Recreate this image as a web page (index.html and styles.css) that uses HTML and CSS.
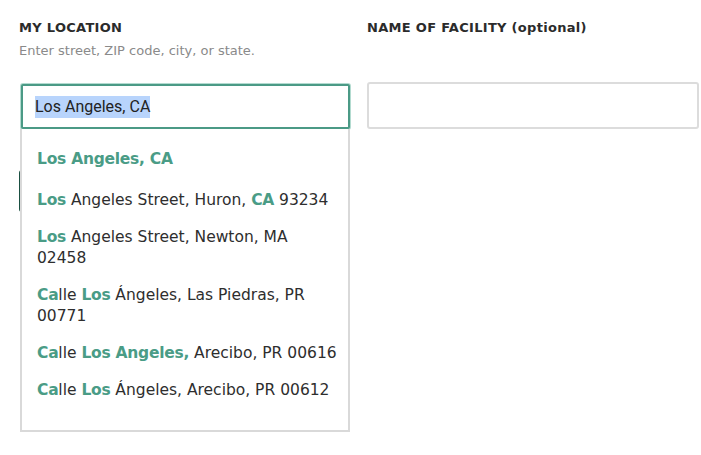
FILE: index.html
```html
<!DOCTYPE html>
<html lang="en">
<head>
<meta charset="utf-8">
<title>Find a facility</title>
<link rel="stylesheet" href="styles.css">
</head>
<body>
<form class="search">
  <div class="fields">
    <div class="field">
      <div class="label">MY LOCATION</div>
      <div class="hint">Enter street, ZIP code, city, or state.</div>
      <div class="combo">
        <div class="input focused"><span class="sel">Los Angeles, CA</span></div>
        <ul class="suggest">
          <li class="first"><b>Los Angeles, CA</b></li>
          <li><b>Los</b> Angeles Street, Huron, <b>CA</b> 93234</li>
          <li><b>Los</b> Angeles Street, Newton, MA 02458</li>
          <li><b>Ca</b>lle <b>Los</b> Ángeles, Las Piedras, PR 00771</li>
          <li><b>Ca</b>lle <b>Los Angeles,</b> Arecibo, PR 00616</li>
          <li><b>Ca</b>lle <b>Los</b> Ángeles, Arecibo, PR 00612</li>
        </ul>
      </div>
    </div>
    <div class="field">
      <div class="label">NAME OF FACILITY (optional)</div>
      <div class="hint"></div>
      <div class="input"></div>
    </div>
  </div>
  <button type="button" class="submit">Search</button>
</form>
</body>
</html>
```
FILE: styles.css
```css
html, body {
  margin: 0;
  padding: 0;
  background: #fff;
}
body {
  min-height: 455px;
  font-family: "DejaVu Sans", "Noto Sans", sans-serif;
  color: #333;
}
.search {
  padding: 20px 2px 0 19px;
}
.fields {
  display: grid;
  grid-template-columns: 332px 332px;
  column-gap: 16px;
}
.field {
  display: flex;
  flex-direction: column;
}
.label {
  font-size: 13px;
  font-weight: bold;
  letter-spacing: 0.3px;
  color: #2b2b2b;
  line-height: 16px;
}
.hint {
  font-size: 13px;
  color: #8a8a8a;
  line-height: 18px;
  height: 18px;
  margin-top: 6px;
}
.combo {
  position: relative;
}
.input {
  box-sizing: border-box;
  height: 47px;
  margin-top: 22px;
  border: 2px solid #dcdcdc;
  border-radius: 3px;
  background: #fff;
  font-family: Roboto, "Liberation Sans", sans-serif;
  font-size: 16px;
  padding: 0 12px;
  display: flex;
  align-items: center;
}
.input.focused {
  height: 45px;
  margin: 24px 0 0 2px;
  width: 329px;
  border-color: #4b9a86;
  box-shadow: 0 0 0 1px #b3dbd0;
  border-radius: 2px;
}
.sel {
  background: #b8d4fc;
  color: #222;
  line-height: 22px;
}
.suggest {
  position: absolute;
  top: 69px;
  left: 1px;
  width: 330px;
  height: 303px;
  box-sizing: border-box;
  margin: 0;
  padding: 0 9px 0 15px;
  list-style: none;
  background: #fff;
  border: 2px solid #d9d9d9;
  border-top: none;
  z-index: 2;
  font-size: 15.5px;
  line-height: 21px;
  color: #2e2e2e;
}
.suggest li {
  padding: 8px 0;
}
.suggest li.first {
  padding: 20px 0 12px;
}
.suggest b {
  color: #4a9c86;
  font-weight: bold;
  letter-spacing: -0.25px;
}
.submit {
  display: block;
  margin: 41px 0 0 0;
  width: 200px;
  height: 42px;
  background: #1e5c4c;
  border: 2px solid #1a4f41;
  border-radius: 3px;
  color: #fff;
  font-family: "DejaVu Sans", sans-serif;
  font-size: 14px;
  font-weight: bold;
}
```
